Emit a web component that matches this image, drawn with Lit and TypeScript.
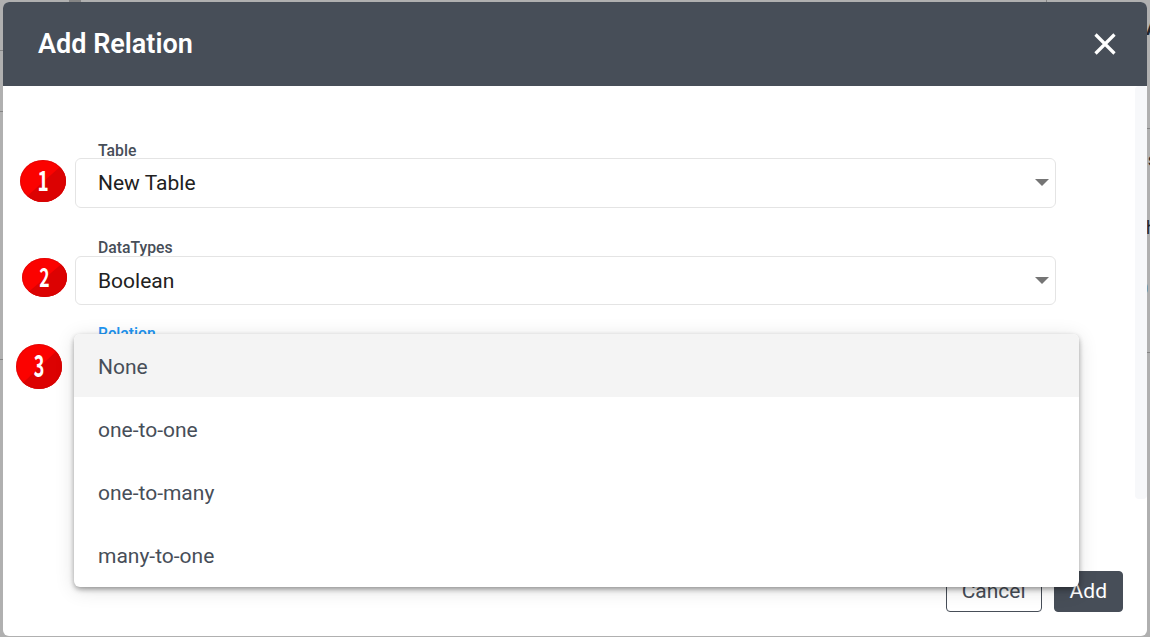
import { LitElement, html, svg, css, type TemplateResult } from 'lit';
import { customElement, property, state } from 'lit/decorators.js';
import { classMap } from 'lit/directives/class-map.js';

@customElement('step-badge')
export class StepBadge extends LitElement {
  @property({ type: Number }) step = 1;

  static styles = css`
    :host {
      display: block;
    }
    svg {
      display: block;
      width: 100%;
      height: 100%;
    }
    .number {
      font-family: 'Noto Sans CJK JP', sans-serif;
      font-size: 28px;
      font-weight: 700;
      fill: #fff;
    }
  `;

  render(): TemplateResult {
    // The 1 has a foot and needs more width than the other digits
    const scale = this.step === 1 ? 0.68 : 0.64;
    return html`
      <svg viewBox="0 0 46 42" preserveAspectRatio="none">
        <defs>
          <clipPath id="disc"><ellipse cx="23" cy="21" rx="23" ry="21" /></clipPath>
        </defs>
        <g clip-path="url(#disc)">
          <rect width="46" height="42" fill="#fb0200" />
          ${svg`<path d="M5 38 L41 6 L46 10 V42 H9 Z" fill="#dc0202" />`}
        </g>
        <ellipse cx="23" cy="21" rx="22.5" ry="20.5" fill="none" stroke="#c80808" stroke-opacity="0.45" />
        <text class="number" transform="translate(23 31) scale(${scale} 1)" text-anchor="middle">${this.step}</text>
      </svg>
    `;
  }
}

@customElement('select-field')
export class SelectField extends LitElement {
  @property() label = '';
  @property() value = '';
  @property({ type: Boolean }) active = false;

  static styles = css`
    :host {
      display: block;
    }
    .label {
      display: block;
      height: 17px;
      padding-left: 23px;
      font-size: 15.75px;
      font-weight: 500;
      line-height: var(--label-line, 18px);
      color: #474e58;
    }
    .label.active {
      color: #2196f3;
    }
    .control {
      display: flex;
      align-items: center;
      justify-content: space-between;
      box-sizing: border-box;
      height: var(--control-height, 49px);
      padding: 0 6px 0 22px;
      border: 1px solid #e4e4e4;
      border-radius: 6px;
      font-size: 21px;
      line-height: 25px;
      color: #212121;
    }
    .value {
      padding-top: 1px;
    }
    .arrow {
      width: 14px;
      height: 7px;
      margin-bottom: 1px;
      fill: #757575;
    }
  `;

  render(): TemplateResult {
    return html`
      <span class=${classMap({ label: true, active: this.active })}>${this.label}</span>
      <div class="control">
        <span class="value">${this.value}</span>
        <svg class="arrow" viewBox="0 0 14 7"><path d="M0 0h14L7 7z" /></svg>
      </div>
    `;
  }
}

@customElement('app-root')
export class AppRoot extends LitElement {
  @state() private selected = 'None';

  private options = ['None', 'one-to-one', 'one-to-many', 'many-to-one'];

  static styles = css`
    :host {
      display: block;
      position: relative;
      box-sizing: border-box;
      height: 637px;
      padding: 2px 3px 1px;
      overflow: hidden;
      background: #b0b0b0;
      font-family: Roboto, sans-serif;
      color: #474e58;
    }

    /* Page behind the dialog */
    .page span,
    .page i {
      position: absolute;
      font-size: 18px;
      line-height: 20px;
      color: #22252c;
    }
    .page i {
      height: 1px;
      background: #858585;
    }
    .page .l1 { left: 0; top: 50px; width: 3px; }
    .page .l2 { left: 0; top: 111px; width: 3px; }
    .page .l3 { left: 0; top: 359px; width: 3px; }
    .page .r1 { left: 1147px; top: 128px; width: 3px; }
    .page .r2 { left: 1147px; top: 352px; width: 3px; }
    .page .tab { left: 69px; top: 0; width: 12px; height: 2px; }
    .page .edge { left: 1046px; top: 0; width: 1px; height: 2px; }
    .page .t1 { left: 1146px; top: 19px; font-weight: 700; }
    .page .t2 { left: 1148px; top: 150px; font-weight: 500; }
    .page .t3 { left: 1146px; top: 218px; }
    .page .t4 { left: 1138px; top: 279px; }

    .dialog {
      position: relative;
      display: flex;
      flex-direction: column;
      height: 100%;
      border-radius: 6px;
      background: #fff;
      overflow: hidden;
    }
    .header {
      display: flex;
      flex: none;
      align-items: center;
      justify-content: space-between;
      box-sizing: border-box;
      height: 84px;
      padding: 0 31px 0 35px;
      background: #474e58;
      color: #fff;
    }
    .title {
      margin: 0;
      font-size: 27px;
      font-weight: 600;
      line-height: 32px;
    }
    .close {
      width: 22px;
      height: 22px;
      stroke: #fff;
      stroke-width: 3.2;
    }

    .body {
      display: flex;
      flex: none;
      height: 413px;
      overflow: hidden;
    }
    .form {
      flex: 1;
      padding: 55px 79px 0 72px;
    }
    .track {
      width: 12px;
      border-radius: 4px;
      background: #f7f8fa;
    }
    .row {
      position: relative;
      height: 98px;
    }
    .row:nth-child(1) {
      --label-line: 20px;
      --control-height: 50px;
    }
    .row:nth-child(2) {
      height: 86px;
    }
    step-badge {
      position: absolute;
    }
    .b1 { left: -55px; top: 19px; width: 46px; height: 42px; }
    .b2 { left: -53px; top: 19px; width: 45px; height: 39px; }
    .b3 { left: -59px; top: 19px; width: 46px; height: 45px; }

    .footer {
      display: flex;
      flex: 1;
      align-items: flex-end;
      justify-content: flex-end;
      gap: 12px;
      padding: 0 24px 24px;
    }
    .button {
      box-sizing: border-box;
      height: 41px;
      padding: 0 15px 1px;
      border: 1px solid #474e58;
      border-radius: 4px;
      background: #fff;
      font: 400 21px/38px Roboto, sans-serif;
      color: #474e58;
    }
    .button.primary {
      background: #474e58;
      color: #fff;
    }

    .menu {
      position: absolute;
      left: 71px;
      top: 332px;
      box-sizing: border-box;
      width: 1005px;
      height: 252.5px;
      border-radius: 6px;
      background: #fff;
      box-shadow:
        0 3px 7px -2px rgba(0, 0, 0, 0.3),
        0 2px 5px rgba(0, 0, 0, 0.2),
        0 3px 20px rgba(0, 0, 0, 0.12);
      overflow: hidden;
    }
    .option {
      height: 63px;
      padding-left: 24px;
      font-size: 21px;
      line-height: 66px;
      cursor: pointer;
    }
    .option.selected {
      background: #f4f4f4;
    }
  `;

  render(): TemplateResult {
    return html`
      <div class="page">
        <i class="l1"></i><i class="l2"></i><i class="l3"></i>
        <i class="r1"></i><i class="r2"></i><i class="tab"></i><i class="edge"></i>
        <span class="t1">A</span><span class="t2">s</span><span class="t3">h</span><span class="t4">0</span>
      </div>
      <div class="dialog">
        <div class="header">
          <h1 class="title">Add Relation</h1>
          <svg class="close" viewBox="0 0 22 22"><path d="M1.5 1.5l19 19M20.5 1.5l-19 19" /></svg>
        </div>
        <div class="body">
          <div class="form">
            <div class="row">
              <step-badge class="b1" .step=${1}></step-badge>
              <select-field label="Table" value="New Table"></select-field>
            </div>
            <div class="row">
              <step-badge class="b2" .step=${2}></step-badge>
              <select-field label="DataTypes" value="Boolean"></select-field>
            </div>
            <div class="row">
              <step-badge class="b3" .step=${3}></step-badge>
              <select-field label="Relation" .value=${this.selected} active></select-field>
            </div>
          </div>
          <div class="track"></div>
        </div>
        <div class="footer">
          <button class="button">Cancel</button>
          <button class="button primary">Add</button>
        </div>
        <div class="menu">
          ${this.options.map(
            o => html`<div
              class=${classMap({ option: true, selected: o === this.selected })}
              @click=${() => (this.selected = o)}
            >
              ${o}
            </div>`
          )}
        </div>
      </div>
    `;
  }
}
